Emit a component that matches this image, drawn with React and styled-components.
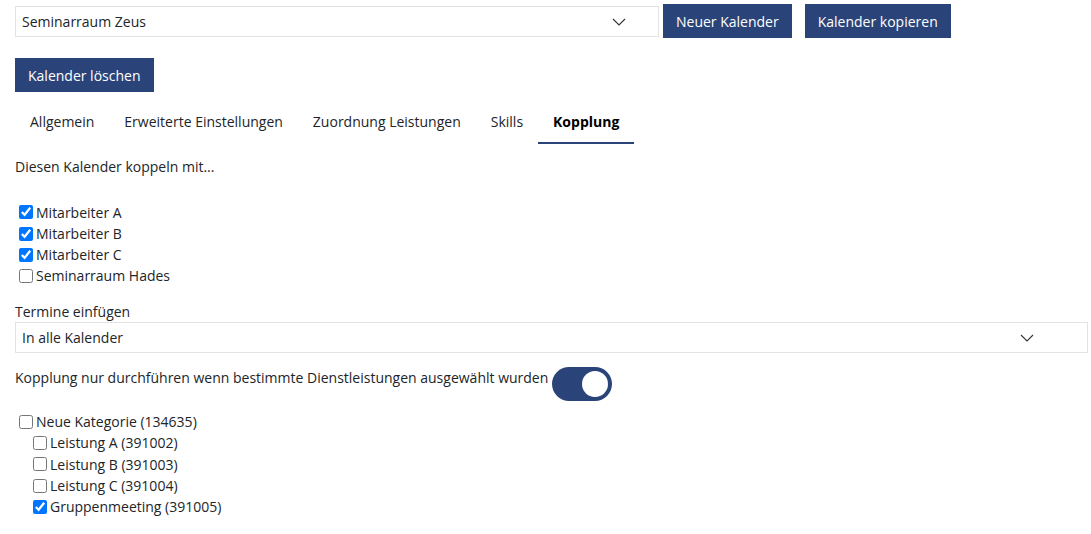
import React from 'react';
import styled, { createGlobalStyle } from 'styled-components';

const GlobalStyle = createGlobalStyle`
  body {
    margin: 0;
    background: #fff;
    font-family: 'Open Sans', 'Liberation Sans', sans-serif;
    font-size: 14px;
    line-height: 21.3px;
    color: #212529;
  }
`;

const Page = styled.div`
  padding: 4px 3px 20px 15px;
`;

const Toolbar = styled.div`
  display: flex;
  flex-wrap: wrap;
  align-items: center;
  row-gap: 20px;
`;

const SelectBox = styled.div`
  display: grid;
  grid-template-columns: 1fr auto 5%;
  align-items: center;
  box-sizing: border-box;
  width: ${(p) => p.width || '100%'};
  height: 31px;
  padding: 1px 0 0 6px;
  border: 1px solid #e3e3e3;
  background: #fff;
  margin-right: ${(p) => p.gap || 0};
  cursor: pointer;
`;

const Button = styled.button`
  height: 34px;
  padding: 0 13px;
  margin-right: 13px;
  border: none;
  background: #2a4479;
  color: #fff;
  font-family: inherit;
  font-size: 14px;
  cursor: pointer;
`;

const Tabs = styled.nav`
  display: flex;
  margin-top: 9px;
`;

const Tab = styled.div`
  padding: 10px 15px 10px;
  border-bottom: 2px solid ${(p) => (p.active ? '#2a4479' : 'transparent')};
  font-weight: ${(p) => (p.active ? 700 : 400)};
  color: ${(p) => (p.active ? '#000' : '#212529')};
  cursor: pointer;
`;

const Intro = styled.p`
  margin: 12px 0 24px;
`;

const CheckRow = styled.label`
  display: flex;
  align-items: center;
  padding-left: ${(p) => (p.indent ? 14 : 0)}px;

  input {
    margin: 3px 3px 3px 4px;
    width: 14px;
    height: 14px;
  }
`;

const FieldLabel = styled.div`
  margin-top: 14px;
`;

const ToggleRow = styled.div`
  display: flex;
  align-items: flex-start;
  gap: 4px;
  margin-top: 14px;
`;

const Toggle = styled.div`
  display: flex;
  justify-content: ${(p) => (p.on ? 'flex-end' : 'flex-start')};
  align-items: center;
  box-sizing: border-box;
  width: 60px;
  height: 34px;
  padding: 0 4px;
  border-radius: 17px;
  background: ${(p) => (p.on ? '#2a4479' : '#ccc')};

  &::after {
    content: '';
    width: 26px;
    height: 26px;
    border-radius: 50%;
    background: #fff;
  }
`;

const Tree = styled.div`
  margin-top: 10px;
`;

function Chevron() {
  return (
    <svg width="14" height="8" viewBox="0 0 14 8">
      <polyline points="1,1 7,7 13,1" fill="none" stroke="#333" strokeWidth="1.1" />
    </svg>
  );
}

function Select({ value, width, gap }) {
  return (
    <SelectBox width={width} gap={gap}>
      <span>{value}</span>
      <Chevron />
      <span />
    </SelectBox>
  );
}

function Check({ label, checked, indent }) {
  return (
    <CheckRow indent={indent}>
      <input type="checkbox" defaultChecked={checked} />
      {label}
    </CheckRow>
  );
}

const tabs = ['Allgemein', 'Erweiterte Einstellungen', 'Zuordnung Leistungen', 'Skills', 'Kopplung'];

const calendars = [
  { label: 'Mitarbeiter A', checked: true },
  { label: 'Mitarbeiter B', checked: true },
  { label: 'Mitarbeiter C', checked: true },
  { label: 'Seminarraum Hades', checked: false },
];

const services = [
  { label: 'Leistung A (391002)', checked: false },
  { label: 'Leistung B (391003)', checked: false },
  { label: 'Leistung C (391004)', checked: false },
  { label: 'Gruppenmeeting (391005)', checked: true },
];

export default function App() {
  return (
    <Page>
      <GlobalStyle />
      <Toolbar>
        <Select value="Seminarraum Zeus" width="644px" gap="4px" />
        <Button>Neuer Kalender</Button>
        <Button>Kalender kopieren</Button>
        <Button>Kalender löschen</Button>
      </Toolbar>

      <Tabs>
        {tabs.map((t) => (
          <Tab key={t} active={t === 'Kopplung'}>{t}</Tab>
        ))}
      </Tabs>

      <Intro>Diesen Kalender koppeln mit...</Intro>

      {calendars.map((c) => (
        <Check key={c.label} {...c} />
      ))}

      <FieldLabel>Termine einfügen</FieldLabel>
      <Select value="In alle Kalender" />

      <ToggleRow>
        <span>Kopplung nur durchführen wenn bestimmte Dienstleistungen ausgewählt wurden</span>
        <Toggle on />
      </ToggleRow>

      <Tree>
        <Check label="Neue Kategorie (134635)" />
        {services.map((s) => (
          <Check key={s.label} indent {...s} />
        ))}
      </Tree>
    </Page>
  );
}
